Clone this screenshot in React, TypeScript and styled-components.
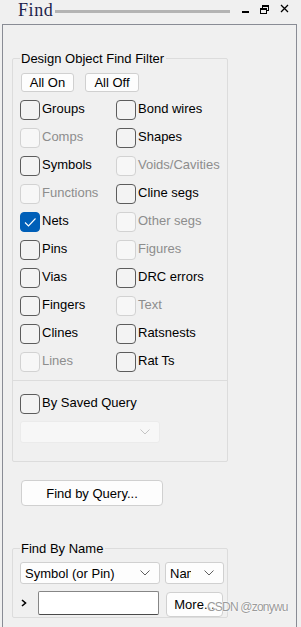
import * as React from 'react';
import styled, { createGlobalStyle } from 'styled-components';

const GlobalStyle = createGlobalStyle`
  html, body {
    margin: 0;
    padding: 0;
    background: #f0f0f0;
  }
  body {
    font-family: "Liberation Sans", Arial, sans-serif;
    font-size: 13px;
    color: #000;
  }
`;

const Window = styled.div`
  position: relative;
  width: 301px;
  height: 627px;
  overflow: hidden;
  background: #f0f0f0;
  display: flex;
  flex-direction: column;
`;

const TitleBar = styled.div`
  height: 24px;
  flex: 0 0 24px;
  display: flex;
  align-items: center;
  padding-left: 18px;
`;

const Title = styled.span`
  align-self: flex-start;
  font-family: "Liberation Serif", "Times New Roman", serif;
  font-size: 18px;
  line-height: 20px;
  letter-spacing: 0.6px;
  color: #1d1f4c;
`;

const Grip = styled.div`
  flex: 0 0 175px;
  height: 3px;
  margin-left: 2px;
  margin-bottom: 1px;
  background: #b4b4b4;
`;

const Controls = styled.div`
  align-self: flex-start;
  display: flex;
  margin: 4px 0 0 12px;
  gap: 11px;
`;

const Panel = styled.div`
  flex: 1;
  margin-left: 2px;
  width: 295px;
  box-sizing: border-box;
  border: 1px solid #898c95;
  border-bottom: none;
  padding-left: 9px;
`;

const GroupBox = styled.fieldset<{ $top: number }>`
  width: 216px;
  box-sizing: border-box;
  margin: ${(p) => p.$top}px 0 0 0;
  padding: 0 0 0 7px;
  border: 1px solid #dcdcdc;
  border-radius: 2px;
  min-width: 0;
`;

const Legend = styled.legend`
  padding: 0 2px 0 1px;
  margin: 0;
  line-height: 15px;
  font-size: 13px;
`;

const ButtonRow = styled.div`
  display: flex;
  gap: 11px;
  margin: 7px 0 0 1px;
`;

const SmallButton = styled.button<{ $w: number }>`
  width: ${(p) => p.$w}px;
  height: 19px;
  padding: 0;
  font-family: inherit;
  font-size: 13px;
  color: #000;
  background: #fdfdfd;
  border: 1px solid #d0d0d0;
  border-radius: 3px;
`;

const Grid = styled.div`
  display: grid;
  grid-template-columns: 96px 96px;
  grid-auto-rows: 28px;
  margin-top: 4px;
`;

const Cell = styled.div`
  display: flex;
  align-items: center;
  white-space: nowrap;
`;

const Box = styled.span<{ $disabled?: boolean; $checked?: boolean }>`
  flex: 0 0 20px;
  width: 20px;
  height: 20px;
  box-sizing: border-box;
  border-radius: 4px;
  display: flex;
  align-items: center;
  justify-content: center;
  border: 1px solid
    ${(p) => (p.$checked ? '#005fb8' : p.$disabled ? '#d2d2d2' : '#5c5c5c')};
  background: ${(p) =>
    p.$checked ? '#005fb8' : p.$disabled ? '#f7f7f7' : '#f3f3f3'};
  margin-right: 2px;
`;

const Label = styled.span<{ $disabled?: boolean }>`
  height: 25px;
  line-height: 22px;
  padding-right: 4px;
  background: #f0f0f0;
  color: ${(p) => (p.$disabled ? '#8d8d8d' : '#000')};
`;

const Separator = styled.div`
  height: 1px;
  background: #dcdcdc;
  margin: 4px 0 0 -7px;
`;

const SavedRow = styled(Cell)`
  height: 28px;
  margin-top: 9px;
`;

const Combo = styled.div<{ $w: number; $disabled?: boolean }>`
  flex: 0 0 ${(p) => p.$w}px;
  width: ${(p) => p.$w}px;
  height: 22px;
  box-sizing: border-box;
  display: flex;
  align-items: center;
  padding: 0 9px 0 4px;
  background: ${(p) => (p.$disabled ? '#f7f7f7' : '#fdfdfd')};
  border: 1px solid ${(p) => (p.$disabled ? '#ebebeb' : '#d0d0d0')};
  border-radius: 3px;
  color: #000;
`;

const ComboText = styled.span<{ $clip?: number }>`
  overflow: hidden;
  white-space: nowrap;
  max-width: ${(p) => (p.$clip ? `${p.$clip}px` : 'none')};
  margin-right: auto;
`;

const SavedCombo = styled(Combo)`
  margin: 3px 0 18px;
`;

const Spacer = styled.span`
  margin-left: auto;
`;

const QueryButton = styled.button`
  display: block;
  width: 142px;
  height: 26px;
  margin: 18px 0 0 9px;
  padding: 0;
  font-family: inherit;
  font-size: 13px;
  color: #000;
  background: #fdfdfd;
  border: 1px solid #d0d0d0;
  border-radius: 4px;
`;

const NameRow = styled.div<{ $top: number }>`
  display: flex;
  align-items: flex-start;
  margin-top: ${(p) => p.$top}px;
`;

const Prompt = styled.span`
  flex: 0 0 18px;
  height: 24px;
  display: flex;
  align-items: center;
  padding-left: 1px;
  box-sizing: border-box;
`;

const NameInput = styled.input`
  flex: 0 0 121px;
  width: 121px;
  height: 24px;
  box-sizing: border-box;
  margin: 0;
  background: #fff;
  border: 1px solid #868686;
  border-bottom-color: #4a4a4a;
  border-radius: 2px;
  font-family: inherit;
  font-size: 13px;
`;

const MoreButton = styled.button`
  flex: 0 0 57px;
  height: 25px;
  margin: 1px 0 0 7px;
  padding: 0;
  font-family: inherit;
  font-size: 13px;
  color: #000;
  background: #fdfdfd;
  border: 1px solid #d0d0d0;
  border-radius: 4px;
`;

const Watermark = styled.div`
  position: absolute;
  left: 207px;
  top: 600px;
  font-size: 12px;
  letter-spacing: -0.8px;
  color: #9b9b9b;
  text-shadow: 0 0 2px #fff, 0 0 2px #fff;
  white-space: nowrap;
`;

const Chevron: React.FC<{ color?: string }> = ({ color = '#5f5f5f' }) => (
  <svg width="10" height="6" viewBox="0 0 10 6">
    <polyline points="0.5,0.5 5,5 9.5,0.5" fill="none" stroke={color} strokeWidth="1" />
  </svg>
);

const Check: React.FC = () => (
  <svg width="14" height="12" viewBox="0 0 14 12">
    <polyline points="2,6.5 5.5,10 12.5,2.5" fill="none" stroke="#fff" strokeWidth="1.1" />
  </svg>
);

type Item = { label: string; disabled?: boolean; checked?: boolean };

const items: Item[] = [
  { label: 'Groups' },
  { label: 'Bond wires' },
  { label: 'Comps', disabled: true },
  { label: 'Shapes' },
  { label: 'Symbols' },
  { label: 'Voids/Cavities', disabled: true },
  { label: 'Functions', disabled: true },
  { label: 'Cline segs' },
  { label: 'Nets', checked: true },
  { label: 'Other segs', disabled: true },
  { label: 'Pins' },
  { label: 'Figures', disabled: true },
  { label: 'Vias' },
  { label: 'DRC errors' },
  { label: 'Fingers' },
  { label: 'Text', disabled: true },
  { label: 'Clines' },
  { label: 'Ratsnests' },
  { label: 'Lines', disabled: true },
  { label: 'Rat Ts' },
];

const CheckItem: React.FC<{ item: Item }> = ({ item }) => (
  <Cell>
    <Box $disabled={item.disabled} $checked={item.checked}>
      {item.checked && <Check />}
    </Box>
    <Label $disabled={item.disabled}>{item.label}</Label>
  </Cell>
);

const App: React.FC = () => (
  <Window>
    <GlobalStyle />
    <TitleBar>
      <Title>Find</Title>
      <Grip />
      <Controls>
        <svg width="7" height="10" viewBox="0 0 7 10">
          <rect x="0" y="7" width="7" height="2" fill="#000" />
        </svg>
        <svg width="9" height="10" viewBox="0 0 9 10">
          <rect x="2.5" y="1.5" width="6" height="5" fill="none" stroke="#000" strokeWidth="1" />
          <line x1="2" y1="2.5" x2="9" y2="2.5" stroke="#000" strokeWidth="1" />
          <rect x="0.5" y="4.5" width="6" height="5" fill="#f0f0f0" stroke="#000" strokeWidth="1" />
          <line x1="0" y1="5.5" x2="7" y2="5.5" stroke="#000" strokeWidth="1" />
        </svg>
        <svg width="9" height="10" viewBox="0 0 9 10">
          <path d="M1 1 L8 8 M8 1 L1 8" stroke="#000" strokeWidth="1.3" />
        </svg>
      </Controls>
    </TitleBar>
    <Panel>
      <GroupBox $top={26}>
        <Legend>Design Object Find Filter</Legend>
        <ButtonRow>
          <SmallButton $w={53}>All On</SmallButton>
          <SmallButton $w={54}>All Off</SmallButton>
        </ButtonRow>
        <Grid>
          {items.map((item) => (
            <CheckItem item={item} key={item.label} />
          ))}
        </Grid>
        <Separator />
        <SavedRow>
          <Box />
          <Label>By Saved Query</Label>
        </SavedRow>
        <SavedCombo $w={140} $disabled>
          <Spacer />
          <Chevron color="#c4c4c4" />
        </SavedCombo>
      </GroupBox>
      <QueryButton>Find by Query...</QueryButton>
      <GroupBox $top={35}>
        <Legend>Find By Name</Legend>
        <NameRow $top={6}>
          <Combo $w={140}>
            <ComboText>Symbol (or Pin)</ComboText>
            <Chevron />
          </Combo>
          <Combo $w={59} style={{ marginLeft: 5 }}>
            <ComboText $clip={21}>Name</ComboText>
            <Chevron />
          </Combo>
        </NameRow>
        <NameRow $top={7}>
          <Prompt>
            <svg width="6" height="8" viewBox="0 0 6 8">
              <polyline points="1,1 4.5,4 1,7" fill="none" stroke="#000" strokeWidth="1.6" />
            </svg>
          </Prompt>
          <NameInput />
          <MoreButton>More...</MoreButton>
        </NameRow>
      </GroupBox>
    </Panel>
    <Watermark>CSDN @zonywu</Watermark>
  </Window>
);

export default App;
